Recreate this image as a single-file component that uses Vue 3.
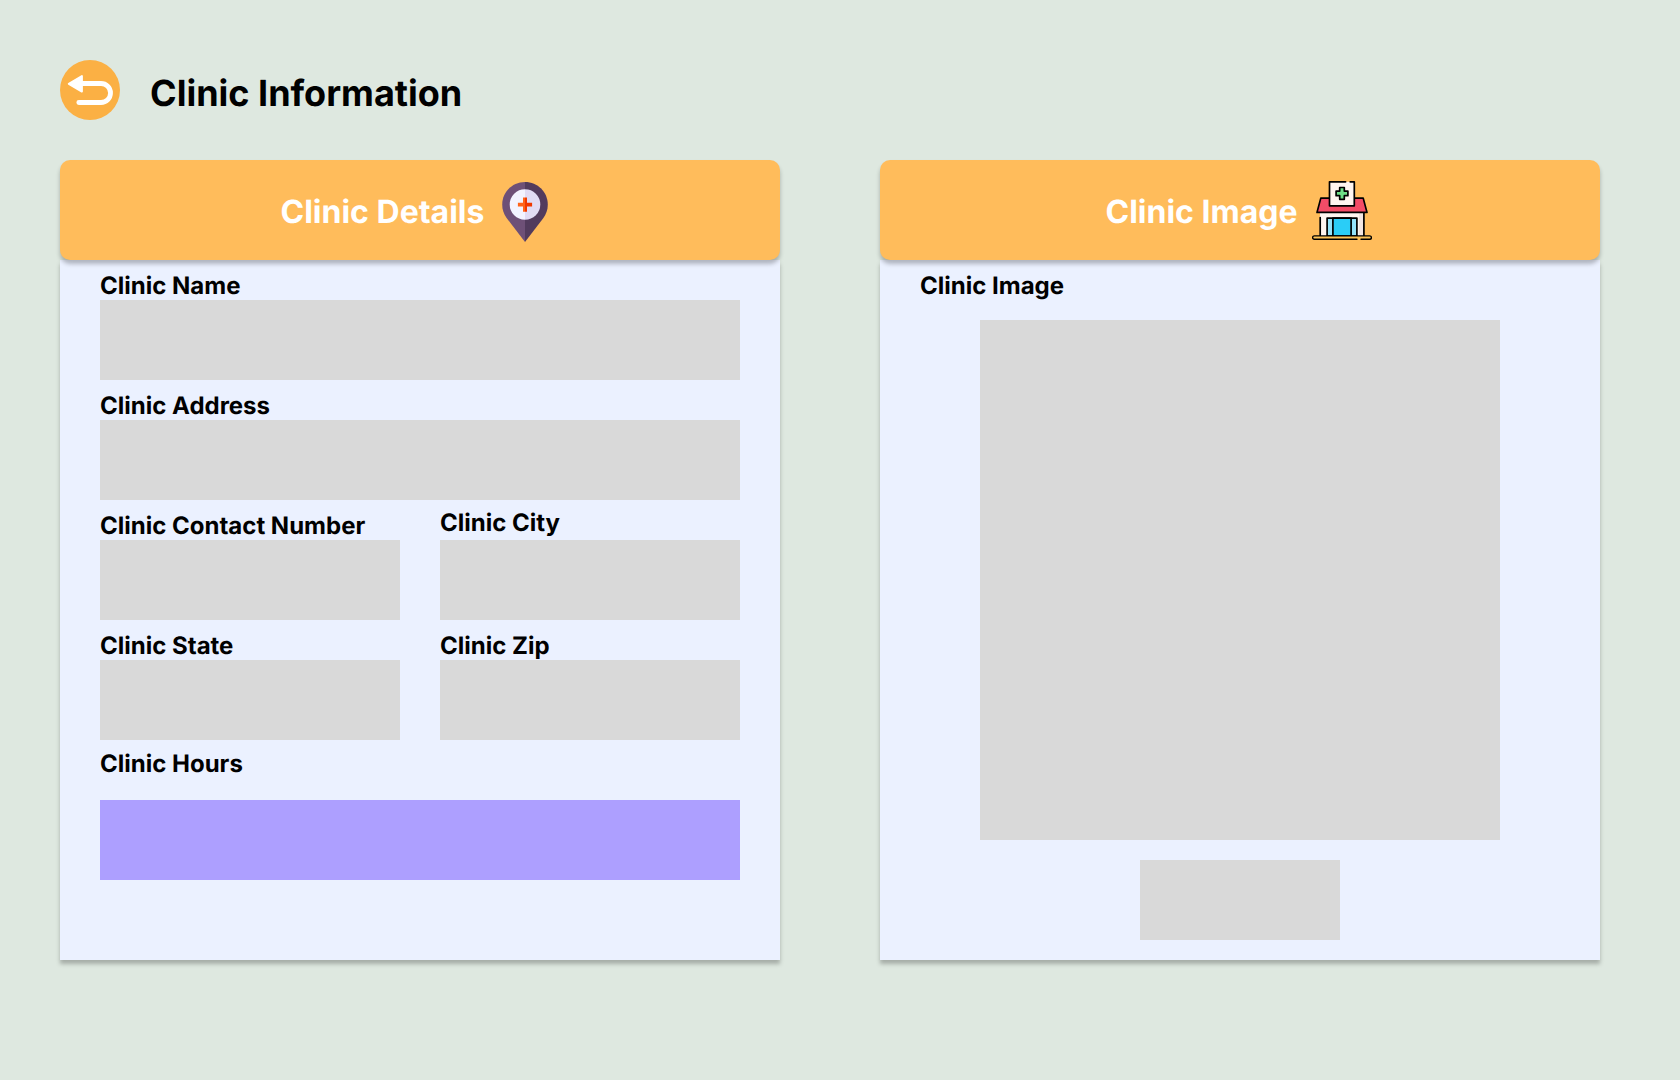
<script setup>
const details = [
  { label: 'Clinic Name', wide: true },
  { label: 'Clinic Address', wide: true },
  { label: 'Clinic Contact Number' },
  { label: 'Clinic City', raised: true },
  { label: 'Clinic State' },
  { label: 'Clinic Zip' },
]
</script>

<template>
  <main class="page">
    <header class="top">
      <svg class="back" viewBox="0 0 60 60" aria-label="Back">
        <circle cx="30" cy="30" r="30" fill="#fbb044" />
        <path d="M20 23.5H41a9.5 9.5 0 0 1 0 19H18.8" fill="none" stroke="#fff" stroke-width="4.8" stroke-linecap="round" />
        <path d="M8.8 23.8 21.9 16V31.6Z" fill="#fff" stroke="#fff" stroke-width="2" stroke-linejoin="round" />
      </svg>
      <h1>Clinic Information</h1>
    </header>

    <div class="panels">
      <section class="panel">
        <div class="panel-head details-head">
          <h2>Clinic Details</h2>
          <svg class="pin" viewBox="0 0 60 60">
            <path d="M30 0C17.3 0 7.2 10.1 7.2 22.7c0 5 1.7 9.4 4.4 13.3L30 60Z" fill="#6e5077" />
            <path d="M30 0c12.7 0 22.8 10.1 22.8 22.7 0 5-1.7 9.4-4.4 13.3L30 60Z" fill="#523b5d" />
            <path d="M30 7.2a15.3 15.3 0 0 0 0 30.6Z" fill="#f3f3ff" />
            <path d="M30 7.2a15.3 15.3 0 0 1 0 30.6Z" fill="#e1dbf4" />
            <path d="M28 15.6H30V29.7H28V24.5H22.9V20.8H28Z" fill="#ff641a" />
            <path d="M30 15.6H32V20.8H37.1V24.5H32V29.7H30Z" fill="#f03800" />
          </svg>
        </div>
        <div class="form">
          <div v-for="f in details" :key="f.label" class="field" :class="{ wide: f.wide, raised: f.raised }">
            <label>{{ f.label }}</label>
            <div class="input"></div>
          </div>
          <div class="field wide hours">
            <label>Clinic Hours</label>
            <div class="input"></div>
          </div>
        </div>
      </section>

      <section class="panel">
        <div class="panel-head image-head">
          <h2>Clinic Image</h2>
          <svg class="shop" viewBox="0 0 60 60" stroke="#000" stroke-width="1.7" stroke-linejoin="round" stroke-linecap="round">
            <path d="M8 32H52V56H8Z" fill="#fff5f0" stroke="none" />
            <path d="M47 32H52V56H47Z" fill="#f3e6e2" stroke="none" />
            <path d="M8.2 37.5V56M51.9 33V56" fill="none" />
            <path d="M8.8 18.1H51.2L55 32.4H5Z" fill="#f34c67" />
            <path d="M17.5 1.8H42.3V25.8H17.5Z" fill="#fff5f0" stroke="none" />
            <path d="M33.6 1.8H17.5V25.8H42.3V1.8H38.2" fill="none" />
            <path d="M27.7 7.5H32.3V11.1H35.9V15.7H32.3V19.3H27.7V15.7H24.1V11.1H27.7Z" fill="#6ede87" />
            <path d="M15.1 38.1H44.9V56H15.1Z" fill="#94e3fa" />
            <path d="M20.9 38.1H39.1V56H20.9Z" fill="#2acdf7" />
            <path d="M2.3 55.9H57.7a1.7 1.7 0 0 1 0 3.4H2.3a1.7 1.7 0 0 1 0-3.4Z" fill="#fec458" stroke="none" />
            <path d="M45 59.3H2.3a1.7 1.7 0 0 1 0-3.4H57.7a1.7 1.7 0 0 1 0 3.4H49" fill="none" stroke-width="1.4" />
          </svg>
        </div>
        <div class="gallery">
          <label>Clinic Image</label>
          <div class="photo"></div>
          <div class="button"></div>
        </div>
      </section>
    </div>
  </main>
</template>

<style>
body {
  margin: 0;
  background: #dee8e0;
}
</style>

<style scoped>
.page {
  box-sizing: border-box;
  width: 1680px;
  height: 1080px;
  padding: 60px 60px 0;
  background: #dee8e0;
  color: #000;
  font-family: Inter, sans-serif;
  text-rendering: geometricPrecision;
  overflow: hidden;
}
.top {
  display: flex;
  gap: 30px;
  height: 100px;
}
.back {
  width: 60px;
  height: 60px;
}
h1 {
  margin: 11px 0 0;
  font-size: 36px;
  line-height: 44px;
  font-weight: 700;
}
.panels {
  display: flex;
  gap: 100px;
}
.panel {
  width: 720px;
  height: 800px;
}
.panel-head {
  position: relative;
  box-sizing: border-box;
  display: flex;
  align-items: flex-start;
  height: 100px;
  border-radius: 10px;
  background: #ffbc5b;
  box-shadow: 0 4px 4px rgba(0, 0, 0, 0.25);
}
.details-head {
  padding-left: 220.5px;
}
.image-head {
  padding-left: 225.5px;
}
h2 {
  margin: 32px 0 0;
  color: #fff;
  font-size: 32px;
  line-height: 39px;
  font-weight: 700;
  white-space: nowrap;
}
.details-head h2 {
  width: 214.5px;
}
.image-head h2 {
  width: 206.5px;
}
.pin,
.shop {
  width: 60px;
  height: 60px;
}
.pin {
  margin-top: 22px;
}
.shop {
  margin-top: 20px;
}
.form,
.gallery {
  box-sizing: border-box;
  height: 700px;
  padding: 0 40px;
  background: #ebf1ff;
  box-shadow: 0 4px 4px rgba(0, 0, 0, 0.25);
}
.form {
  display: grid;
  grid-template-columns: 300px 300px;
  grid-auto-rows: 120px;
  column-gap: 40px;
}
.wide {
  grid-column: span 2;
}
label {
  display: block;
  padding-top: 11px;
  font-size: 24px;
  line-height: 29px;
  font-weight: 700;
  white-space: nowrap;
}
.raised label {
  padding: 8px 0 3px;
}
.input {
  height: 80px;
  background: #d9d9d9;
}
.hours label {
  padding: 9px 0 22px;
}
.hours .input {
  background: #ad9fff;
}
.photo {
  width: 520px;
  height: 520px;
  margin: 20px auto;
  background: #d9d9d9;
}
.button {
  width: 200px;
  height: 80px;
  margin: 0 auto;
  background: #d9d9d9;
}
</style>
